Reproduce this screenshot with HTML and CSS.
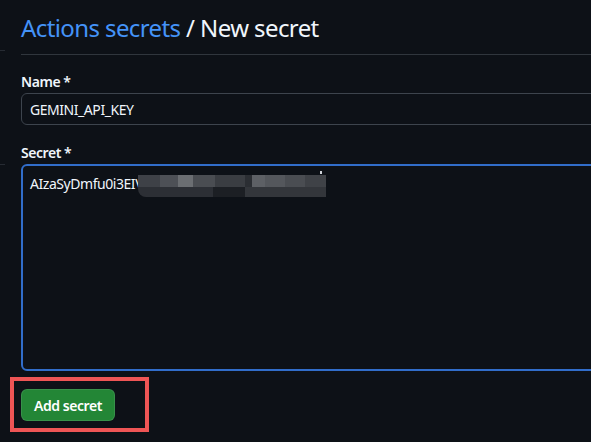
FILE: index.html
```html
<!DOCTYPE html>
<html lang="en">

<head>
    <meta charset="UTF-8">
    <meta name="viewport" content="width=device-width, initial-scale=1.0">
    <title>New secret</title>
    <link rel="stylesheet" href="styles.css">
</head>

<body>
    <div class="page">
        <aside class="side">
            <div class="side-item first"></div>
            <div class="side-item"></div>
        </aside>

        <main class="content">
            <div class="subhead">
                <h2><a href="#" class="crumb">Actions secrets</a> / New secret</h2>
            </div>

            <form class="secret-form">
                <div class="form-group">
                    <label for="secretName">Name *</label>
                    <input type="text" id="secretName" class="form-control" value="GEMINI_API_KEY">
                </div>

                <div class="form-group">
                    <label>Secret *</label>
                    <div class="form-control textarea focused">
                        <span class="secret-text">AIzaSyDmfu0i3EIV</span>
                        <span class="masked">
                            <span class="mask-row top"></span>
                            <span class="mask-row bottom"></span>
                            <span class="dot"></span>
                        </span>
                    </div>
                </div>

                <div class="highlight">
                    <button type="button" class="btn-primary">Add secret</button>
                </div>
            </form>
        </main>
    </div>
</body>

</html>
```
FILE: styles.css
```css
body {
    margin: 0;
    background-color: #0d1117;
    color: #f0f6fc;
    font-family: "Noto Sans", "Open Sans", sans-serif;
    font-size: 14px;
    letter-spacing: -0.45px;
    overflow: hidden;
}

.page {
    display: flex;
    width: 760px;
}

.side {
    width: 5px;
    flex-shrink: 0;
}

.side-item {
    height: 113px;
    border-bottom: 1px solid #262b33;
}

.side-item.first {
    height: 50px;
}

.content {
    flex: 1;
    margin-left: 16px;
}

.subhead {
    border-bottom: 1px solid #30363d;
    padding-top: 10px;
    padding-bottom: 8px;
}

.subhead h2 {
    margin: 0;
    font-size: 24px;
    font-weight: 400;
    letter-spacing: -0.6px;
    line-height: 36px;
    color: #f0f6fc;
}

.crumb {
    color: #4493f8;
    text-decoration: none;
}

.secret-form {
    padding-top: 16px;
}

.form-group {
    margin-bottom: 17px;
}

.form-group label {
    display: block;
    font-weight: 600;
    font-size: 14px;
    line-height: 21px;
    margin-bottom: 1px;
}

.form-control {
    display: block;
    box-sizing: border-box;
    width: 100%;
    height: 32px;
    padding: 0 8px;
    background-color: #0d1117;
    border: 1px solid #3d444d;
    border-radius: 6px;
    color: #f0f6fc;
    font-family: inherit;
    font-size: 14px;
    letter-spacing: -0.45px;
    outline: none;
}

.textarea {
    height: 207px;
    padding: 8px 7px;
    line-height: 20px;
    display: flex;
    align-items: flex-start;
}

.focused {
    border: 2px solid #316dca;
}

.masked {
    position: relative;
    display: flex;
    flex-direction: column;
    width: 192px;
    height: 22px;
    margin-top: 1px;
    margin-left: -5px;
    filter: blur(0.7px);
}

.mask-row {
    display: block;
    height: 12px;
    background: linear-gradient(to right,
        #3e4147 0, #3e4147 22px,
        #4d5056 22px, #4d5056 40px,
        #6b6e72 40px, #6b6e72 55px,
        #4a4d52 55px, #4a4d52 77px,
        #3a3d42 77px, #3a3d42 107px,
        #2b2e33 107px, #2b2e33 114px,
        #5d6065 114px, #5d6065 127px,
        #54575c 127px, #54575c 147px,
        #4a4d52 147px, #4a4d52 167px,
        #3f4247 167px, #3f4247 188px,
        transparent 188px);
}

.mask-row.bottom {
    height: 10px;
    border-bottom-left-radius: 8px;
    background: linear-gradient(to right,
        #2c2f35 0, #2c2f35 75px,
        #1c1f24 75px, #1c1f24 107px,
        #33363b 107px, #33363b 188px,
        transparent 188px);
}

.dot {
    position: absolute;
    right: 8px;
    top: -4px;
    width: 2px;
    height: 3px;
    background-color: #d0d4da;
}

.highlight {
    display: inline-flex;
    margin-left: -11px;
    margin-top: -11px;
    padding: 8px 30px 7px 7px;
    border: 4px solid #ee5555;
}

.btn-primary {
    height: 32px;
    padding: 0 12px;
    background-color: #238636;
    color: #fff;
    border: 1px solid rgba(240, 246, 252, 0.1);
    border-radius: 6px;
    font-family: inherit;
    font-size: 14px;
    font-weight: 600;
    letter-spacing: -0.45px;
    cursor: pointer;
}
```
